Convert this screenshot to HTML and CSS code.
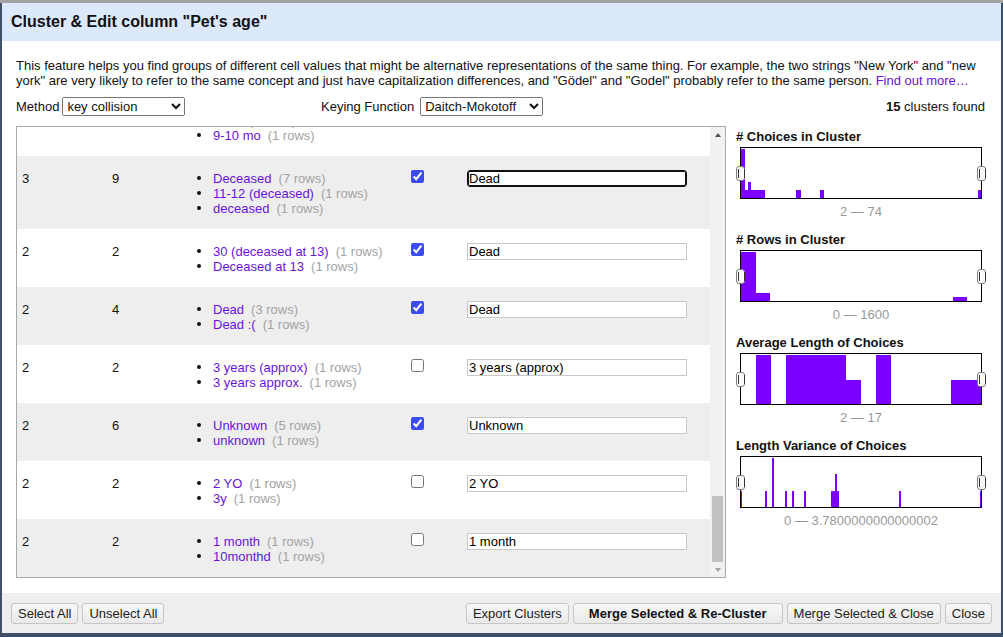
FILE: index.html
```html
<!DOCTYPE html>
<html lang="en">
<head>
<meta charset="utf-8">
<title>Cluster &amp; Edit column</title>
<link rel="stylesheet" href="styles.css">
</head>
<body>
<div class="dialog">
  <div class="dlg-header">Cluster &amp; Edit column "Pet's age"</div>
  <div class="dlg-body">
    <p class="intro">This feature helps you find groups of different cell values that might be alternative representations of the same thing. For example, the two strings "New York" and "new york" are very likely to refer to the same concept and just have capitalization differences, and "Gödel" and "Godel" probably refer to the same person. <a href="#">Find out more…</a></p>
    <div class="controls">
      <div class="ctl ctl-method"><span class="ctl-label">Method</span><select><option>key collision</option><option>nearest neighbor</option></select></div>
      <div class="ctl ctl-key"><span class="ctl-label">Keying Function</span><select><option>Daitch-Mokotoff</option><option>fingerprint</option></select></div>
      <div class="found"><b>15</b> clusters found</div>
    </div>
    <div class="main">
      <div class="table-box">
        <div class="table-scroll" id="scroller">
          <table class="clusters">
            <colgroup><col class="c1"><col class="c2"><col class="c3"><col class="c4"><col class="c5"></colgroup>
            <tbody id="rows">
              <tr>
                <td>4</td><td>4</td>
                <td><ul class="choices"><li><a href="#">9 months</a><span class="cnt">(1 rows)</span></li><li><a href="#">9-10 months</a><span class="cnt">(1 rows)</span></li><li><a href="#">9 mo</a><span class="cnt">(1 rows)</span></li><li><a href="#">9-10 mo</a><span class="cnt">(1 rows)</span></li></ul></td>
                <td class="cb"><input type="checkbox"></td>
                <td class="val"><input type="text" value="9 months"></td>
              </tr>
              <tr class="alt">
                <td>3</td><td>9</td>
                <td><ul class="choices"><li><a href="#">Deceased</a><span class="cnt">(7 rows)</span></li><li><a href="#">11-12 (deceased)</a><span class="cnt">(1 rows)</span></li><li><a href="#">deceased</a><span class="cnt">(1 rows)</span></li></ul></td>
                <td class="cb"><input type="checkbox" checked></td>
                <td class="val"><input type="text" class="focused" value="Dead"></td>
              </tr>
              <tr>
                <td>2</td><td>2</td>
                <td><ul class="choices"><li><a href="#">30 (deceased at 13)</a><span class="cnt">(1 rows)</span></li><li><a href="#">Deceased at 13</a><span class="cnt">(1 rows)</span></li></ul></td>
                <td class="cb"><input type="checkbox" checked></td>
                <td class="val"><input type="text" value="Dead"></td>
              </tr>
              <tr class="alt">
                <td>2</td><td>4</td>
                <td><ul class="choices"><li><a href="#">Dead</a><span class="cnt">(3 rows)</span></li><li><a href="#">Dead :(</a><span class="cnt">(1 rows)</span></li></ul></td>
                <td class="cb"><input type="checkbox" checked></td>
                <td class="val"><input type="text" value="Dead"></td>
              </tr>
              <tr>
                <td>2</td><td>2</td>
                <td><ul class="choices"><li><a href="#">3 years (approx)</a><span class="cnt">(1 rows)</span></li><li><a href="#">3 years approx.</a><span class="cnt">(1 rows)</span></li></ul></td>
                <td class="cb"><input type="checkbox"></td>
                <td class="val"><input type="text" value="3 years (approx)"></td>
              </tr>
              <tr class="alt">
                <td>2</td><td>6</td>
                <td><ul class="choices"><li><a href="#">Unknown</a><span class="cnt">(5 rows)</span></li><li><a href="#">unknown</a><span class="cnt">(1 rows)</span></li></ul></td>
                <td class="cb"><input type="checkbox" checked></td>
                <td class="val"><input type="text" value="Unknown"></td>
              </tr>
              <tr>
                <td>2</td><td>2</td>
                <td><ul class="choices"><li><a href="#">2 YO</a><span class="cnt">(1 rows)</span></li><li><a href="#">3y</a><span class="cnt">(1 rows)</span></li></ul></td>
                <td class="cb"><input type="checkbox"></td>
                <td class="val"><input type="text" value="2 YO"></td>
              </tr>
              <tr class="alt">
                <td>2</td><td>2</td>
                <td><ul class="choices"><li><a href="#">1 month</a><span class="cnt">(1 rows)</span></li><li><a href="#">10monthd</a><span class="cnt">(1 rows)</span></li></ul></td>
                <td class="cb"><input type="checkbox"></td>
                <td class="val"><input type="text" value="1 month"></td>
              </tr>
            </tbody>
          </table>
        </div>
        <div class="vscroll" aria-hidden="true">
          <div class="sb-btn sb-up"></div>
          <div class="sb-track"><div class="sb-thumb"></div></div>
          <div class="sb-btn sb-down"></div>
        </div>
      </div>
      <div class="facets">
        <div class="facet">
          <div class="facet-title"># Choices in Cluster</div>
          <div class="hist">
            <svg width="240" height="50" viewBox="0 0 240 50" shape-rendering="crispEdges">
              <g fill="#7b00ff">
                <rect x="0" y="1" width="4" height="49"/>
                <rect x="4" y="42" width="3" height="8"/>
                <rect x="7" y="34" width="3" height="16"/>
                <rect x="10" y="42" width="14" height="8"/>
                <rect x="55" y="42" width="5" height="8"/>
                <rect x="79" y="42" width="4" height="8"/>
                <rect x="237" y="42" width="3" height="8"/>
              </g>
            </svg>
            <span class="handle left"></span><span class="handle right"></span>
          </div>
          <div class="range">2 — 74</div>
        </div>
        <div class="facet">
          <div class="facet-title"># Rows in Cluster</div>
          <div class="hist">
            <svg width="240" height="50" viewBox="0 0 240 50" shape-rendering="crispEdges">
              <g fill="#7b00ff">
                <rect x="0" y="1" width="15" height="49"/>
                <rect x="15" y="42" width="14" height="8"/>
                <rect x="212" y="46" width="14" height="4"/>
              </g>
            </svg>
            <span class="handle left"></span><span class="handle right"></span>
          </div>
          <div class="range">0 — 1600</div>
        </div>
        <div class="facet">
          <div class="facet-title">Average Length of Choices</div>
          <div class="hist">
            <svg width="240" height="50" viewBox="0 0 240 50" shape-rendering="crispEdges">
              <g fill="#7b00ff">
                <rect x="15" y="1" width="15" height="49"/>
                <rect x="45" y="1" width="60" height="49"/>
                <rect x="105" y="26" width="15" height="24"/>
                <rect x="135" y="1" width="15" height="49"/>
                <rect x="210" y="26" width="30" height="24"/>
              </g>
            </svg>
            <span class="handle left"></span><span class="handle right"></span>
          </div>
          <div class="range">2 — 17</div>
        </div>
        <div class="facet">
          <div class="facet-title">Length Variance of Choices</div>
          <div class="hist">
            <svg width="240" height="50" viewBox="0 0 240 50" shape-rendering="crispEdges">
              <g fill="#7b00ff">
                <rect x="0" y="34" width="1" height="16"/>
                <rect x="24" y="34" width="2" height="16"/>
                <rect x="31" y="1" width="2" height="49"/>
                <rect x="44" y="34" width="2" height="16"/>
                <rect x="51" y="34" width="2" height="16"/>
                <rect x="63" y="34" width="2" height="16"/>
                <rect x="90" y="34" width="4" height="16"/>
                <rect x="94" y="17" width="2" height="33"/>
                <rect x="96" y="34" width="2" height="16"/>
                <rect x="158" y="34" width="2" height="16"/>
                <rect x="239" y="34" width="1" height="16"/>
              </g>
            </svg>
            <span class="handle left"></span><span class="handle right"></span>
          </div>
          <div class="range">0 — 3.7800000000000002</div>
        </div>
      </div>
    </div>
  </div>
  <div class="dlg-footer">
    <div class="btns">
      <button type="button">Select All</button>
      <button type="button">Unselect All</button>
    </div>
    <div class="btns">
      <button type="button">Export Clusters</button>
      <button type="button" class="primary">Merge Selected &amp; Re-Cluster</button>
      <button type="button">Merge Selected &amp; Close</button>
      <button type="button">Close</button>
    </div>
  </div>
</div>
<script src="script.js"></script>
</body>
</html>
```

FILE: styles.css
```css
* { box-sizing: border-box; }
html, body { margin: 0; padding: 0; }
body {
  width: 1003px;
  height: 637px;
  overflow: hidden;
  background: #a3a3a3;
  font-family: "Liberation Sans", Arial, sans-serif;
  font-size: 13px;
  color: #111;
}
.dialog {
  margin-top: 3px;
  height: 634px;
  background: #fff;
  border-left: 2px solid #3e5068;
  border-right: 2px solid #3e5068;
  border-bottom: 4px solid #3e5068;
  display: flex;
  flex-direction: column;
}
.dlg-header {
  flex: none;
  height: 38px;
  background: #dce8fc;
  padding-left: 9px;
  display: flex;
  align-items: center;
  font-size: 16px;
  font-weight: bold;
  color: #111;
}
.dlg-body {
  flex: 1;
  min-height: 0;
  padding: 0 14px;
  display: flex;
  flex-direction: column;
}
.intro {
  margin: 17px 0 0;
  line-height: 15px;
}
.intro a, .choices a {
  color: #6a13dd;
  text-decoration: none;
}
.controls {
  display: flex;
  align-items: center;
  height: 19px;
  margin-top: 9px;
  line-height: 15px;
}
.ctl { display: flex; align-items: center; flex: none; }
.ctl-method { width: 305px; }
.ctl-method .ctl-label { margin-right: 3px; }
.ctl-key .ctl-label { margin-right: 6px; }
select {
  flex: none;
  width: 123px;
  height: 19px;
  margin: 0;
  font-family: "Liberation Sans", Arial, sans-serif;
  font-size: 13px;
  color: #111;
}
.found { margin-left: auto; margin-right: 2px; }
.main {
  display: flex;
  gap: 10px;
  margin-top: 10px;
}
.table-box {
  flex: none;
  display: flex;
  width: 710px;
  height: 452px;
  border: 1px solid #a9a9a9;
}
.table-scroll {
  flex: 1;
  min-width: 0;
  overflow: hidden;
}
.vscroll {
  flex: none;
  width: 15px;
  display: flex;
  flex-direction: column;
  background: #f1f1f1;
}
.sb-btn {
  flex: none;
  height: 15px;
  display: flex;
  align-items: center;
  justify-content: center;
}
.sb-btn::after {
  content: "";
  width: 0;
  height: 0;
  border-left: 3.5px solid transparent;
  border-right: 3.5px solid transparent;
}
.sb-up::after { border-bottom: 4px solid #505050; }
.sb-down::after { border-top: 4px solid #a3a3a3; }
.sb-track {
  flex: 1;
  display: flex;
  flex-direction: column;
  padding: 0 2px;
}
.sb-thumb {
  margin-top: auto;
  height: 66px;
  background: #c1c1c1;
}
.clusters {
  width: 100%;
  table-layout: fixed;
  border-collapse: collapse;
  line-height: 15px;
}
.c1 { width: 90px; }
.c2 { width: 80px; }
.c3 { width: 219px; }
.c4 { width: 56px; }
.clusters td {
  padding: 15px 5px 13px;
  vertical-align: top;
}
.clusters tr.alt { background: #eeeeee; }
.clusters td.cb, .clusters td.val { padding-top: 14px; }
.choices {
  margin: 0;
  padding: 0 0 0 5px;
  list-style: none;
  white-space: nowrap;
}
.choices li::before {
  content: "";
  display: inline-block;
  width: 4px;
  height: 4px;
  border-radius: 50%;
  background: #111;
  margin-right: 12px;
  vertical-align: 3px;
}
.cnt { color: #a3a3a3; margin-left: 7px; }
.cb input {
  display: block;
  margin: 0;
  width: 13px;
  height: 13px;
  accent-color: #3b4bf6;
}
.val input {
  display: block;
  width: 220px;
  height: 17px;
  margin: 0;
  padding: 0 1px;
  border: 1px solid #c8c8c8;
  font-family: "Liberation Sans", Arial, sans-serif;
  font-size: 13px;
  color: #000;
  background: #fff;
}
.val input.focused {
  border-color: #111;
  border-radius: 3px;
  box-shadow: inset 0 0 0 1px #111;
  outline: none;
}
.facets {
  flex: 1;
  padding-top: 3px;
}
.facet + .facet { margin-top: 13px; }
.facet-title {
  font-weight: bold;
  line-height: 15px;
}
.hist {
  position: relative;
  width: 242px;
  height: 52px;
  margin: 3px 0 0 4px;
  border: 1px solid #000;
  background: #fff;
}
.hist svg { display: block; }
.handle {
  position: absolute;
  top: 18px;
  width: 9px;
  height: 15px;
  border: 1px solid #7f7f7f;
  border-radius: 3px;
  background: #fafafa;
}
.handle::after {
  content: "";
  position: absolute;
  left: 1px;
  top: 2px;
  width: 5px;
  height: 9px;
  border-left: 1px solid #333;
  border-right: 1px solid #333;
  box-shadow: inset 1px 0 0 #fff, inset -1px 0 0 #fff;
}
.handle.left { left: -5px; }
.handle.right { right: -5px; }
.range {
  width: 242px;
  margin: 5px 0 0 4px;
  text-align: center;
  color: #999;
  line-height: 15px;
}
.dlg-footer {
  flex: none;
  height: 40px;
  background: #eeeeee;
  padding: 0 9px;
  display: flex;
  align-items: center;
  justify-content: space-between;
}
.btns { display: flex; gap: 4px; }
button {
  height: 21px;
  margin: 0;
  padding: 0 6px;
  border: 1px solid #c6c6c6;
  border-radius: 3px;
  background: linear-gradient(#f8f8f8, #e9e9e9);
  font-family: "Liberation Sans", Arial, sans-serif;
  font-size: 13px;
  color: #222;
}
button.primary {
  font-weight: bold;
  padding: 0 15px;
  color: #111;
}
```

FILE: script.js
```js
(function () {
  var units = [" yr", " yrs", " year", " years", "y", " yo", " y.o.", " years old", " yrs old", "yr", " Y", " YO"];
  function makeItems(n, start) {
    var items = [];
    for (var i = 0; i < n; i++) {
      var num = start + Math.floor(i / units.length);
      items.push([num + units[i % units.length], i === 0 ? (n > 20 ? 1520 : 12) : 1]);
    }
    return items;
  }
  var hidden = [
    { rows: 1600, items: makeItems(74, 1) },
    { rows: 48, items: makeItems(30, 8) },
    { rows: 26, items: makeItems(14, 11) },
    { rows: 11, items: makeItems(6, 14) },
    { rows: 9, items: makeItems(5, 15) },
    { rows: 7, items: makeItems(4, 16) },
    { rows: 5, items: makeItems(3, 17) }
  ];
  var tbody = document.getElementById("rows");
  var first = tbody.firstElementChild;
  hidden.forEach(function (c, idx) {
    var tr = document.createElement("tr");
    if (idx % 2 === 0) tr.className = "alt";
    var lis = c.items.map(function (it) {
      return '<li><a href="#">' + it[0] + '</a><span class="cnt">(' + it[1] + ' rows)</span></li>';
    }).join("");
    tr.innerHTML = "<td>" + c.items.length + "</td><td>" + c.rows + "</td>" +
      '<td><ul class="choices">' + lis + "</ul></td>" +
      '<td class="cb"><input type="checkbox"></td>' +
      '<td class="val"><input type="text" value="' + c.items[0][0] + '"></td>';
    tbody.insertBefore(tr, first);
  });
  var box = document.getElementById("scroller");
  box.scrollTop = box.scrollHeight;
})();
```
